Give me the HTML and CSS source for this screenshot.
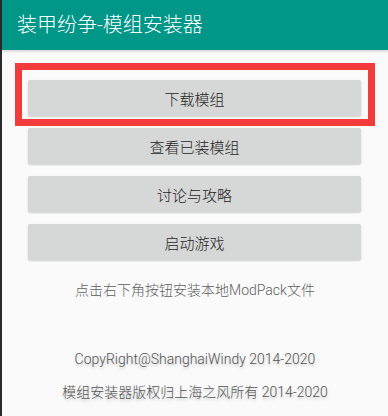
FILE: index.html
```html
<!DOCTYPE html>
<html lang="zh">
<head>
<meta charset="utf-8">
<link rel="stylesheet" href="styles.css">
</head>
<body>
<div class="screen">
  <header class="appbar">装甲纷争-模组安装器</header>
  <main class="content">
    <div class="buttons">
      <button class="btn">下载模组</button>
      <button class="btn">查看已装模组</button>
      <button class="btn">讨论与攻略</button>
      <button class="btn">启动游戏</button>
    </div>
    <p class="hint">点击右下角按钮安装本地ModPack文件</p>
    <p class="copy copy-en">CopyRight@ShanghaiWindy 2014-2020</p>
    <p class="copy copy-cn">模组安装器版权归上海之风所有 2014-2020</p>
  </main>
  <div class="highlight"></div>
</div>
</body>
</html>
```
FILE: styles.css
```css
html, body {
  margin: 0;
  padding: 0;
  width: 388px;
  height: 416px;
  overflow: hidden;
}
body {
  font-family: "Roboto", "Noto Sans CJK SC", sans-serif;
  background: #fafafa;
}
.screen {
  position: relative;
  width: 386px;
  height: 416px;
  border-left: 2px solid #2b2b2b;
  background: #fafafa;
}
.appbar {
  height: 50px;
  background: #009688;
  color: #fff;
  font-size: 20px;
  line-height: 50px;
  padding-left: 15px;
  font-weight: 300;
  box-shadow: 0 1px 3px rgba(0,0,0,0.2);
}
.content {
  display: flex;
  flex-direction: column;
  align-items: center;
}
.buttons {
  display: flex;
  flex-direction: column;
  gap: 12px;
  margin-top: 30px;
  width: 333px;
  margin-left: -1px;
}
.btn {
  height: 36px;
  border: none;
  border-radius: 2px;
  background: #d6d7d7;
  box-shadow: 0 1px 2px rgba(0,0,0,0.18);
  font-family: "Roboto", "Noto Sans CJK SC", sans-serif;
  font-size: 15px;
  font-weight: 300;
  color: #1e1e1e;
  padding: 0;
}
.hint {
  margin: 20px 0 0;
  font-size: 14px;
  line-height: 20px;
  font-weight: 300;
  color: #5f5f5f;
}
.copy {
  margin: 0;
  font-size: 14px;
  line-height: 20px;
  font-weight: 300;
  color: #555;
  text-shadow: 0 2px 3px rgba(0,0,0,0.22);
}
.copy-en {
  margin-top: 49px;
}
.copy-cn {
  margin-top: 13px;
}
.highlight {
  position: absolute;
  left: 13px;
  top: 63px;
  width: 346px;
  height: 49px;
  border: 7px solid #f23b3b;
}
```
